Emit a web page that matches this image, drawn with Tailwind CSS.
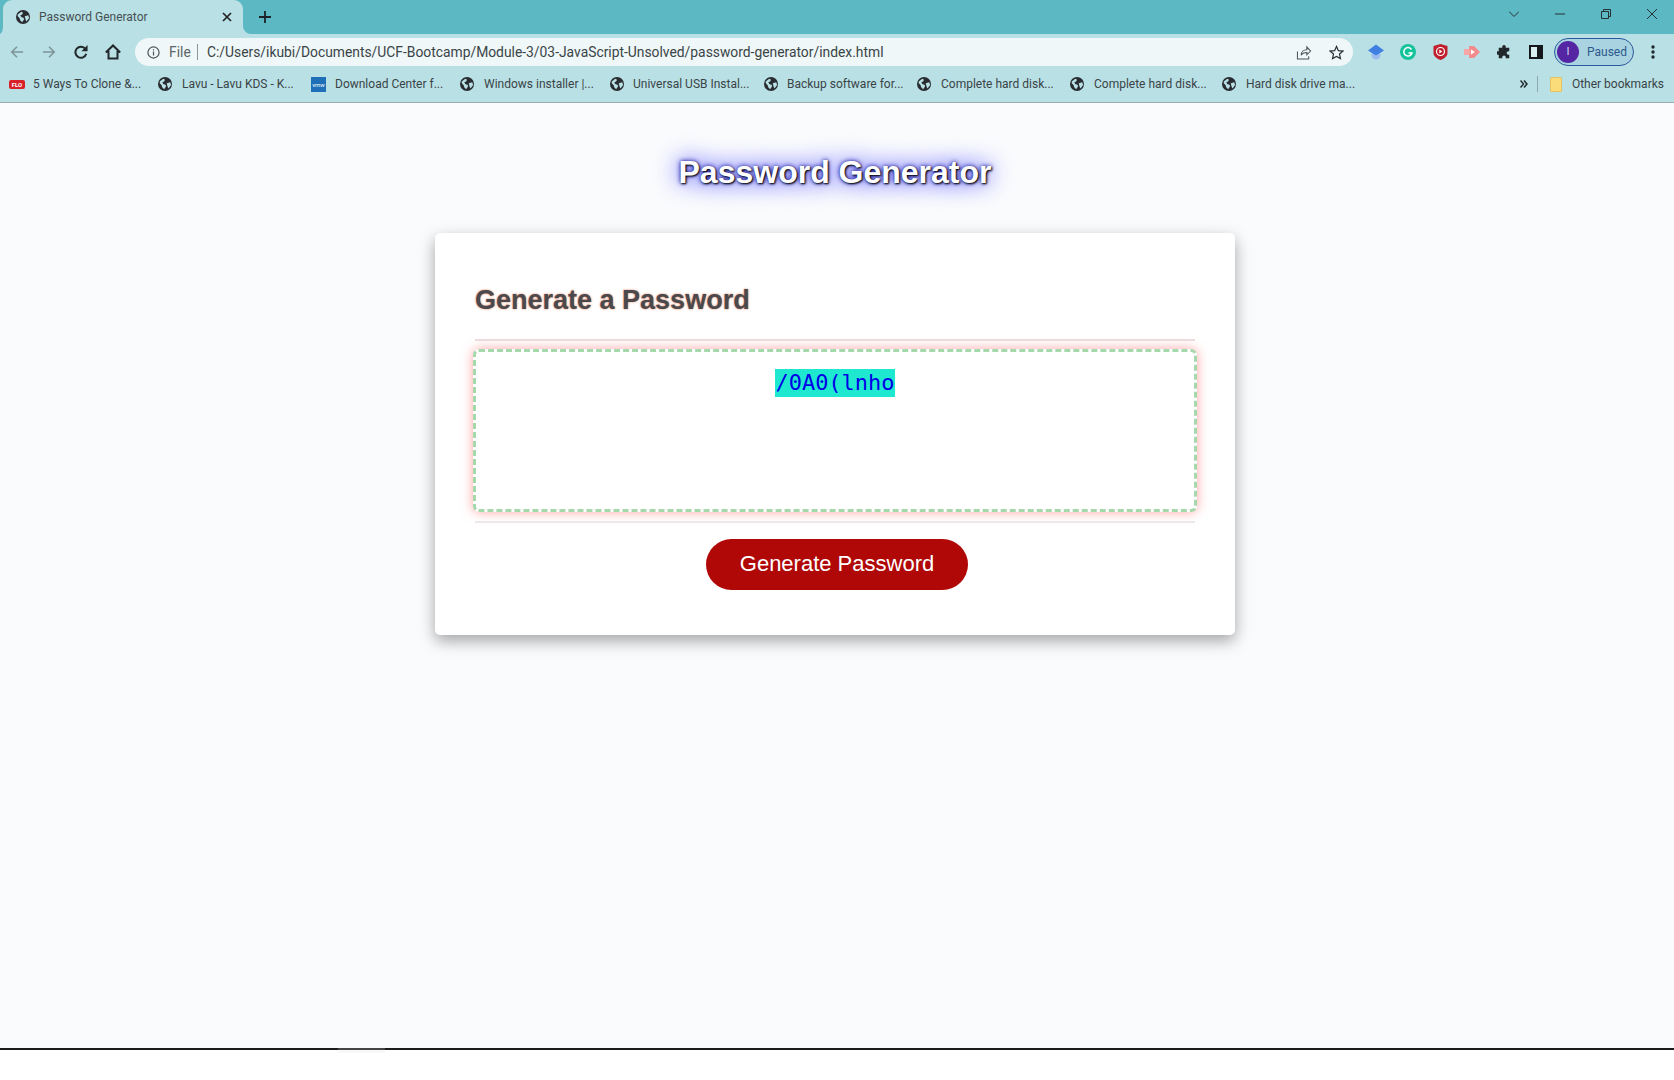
<!DOCTYPE html>
<html lang="en">

<head>
    <meta charset="UTF-8">
    <title>Password Generator</title>
    <script src="https://cdn.jsdelivr.net/npm/@tailwindcss/browser@4"></script>
</head>

<body class="h-[1080px] overflow-hidden bg-white font-['Roboto','Open_Sans',sans-serif] relative">

    <!-- tab strip -->
    <div class="h-[34px] bg-[#5cb8c3] flex items-end relative">
        <svg class="absolute left-0 bottom-0 w-[3px] h-[8px]" viewBox="0 0 3 8"><path d="M3 0C3 4 2 7 0 8H3Z" fill="#b9e0e5" /></svg>
        <svg class="absolute left-[243px] bottom-0 w-[8px] h-[8px]" viewBox="0 0 8 8"><path d="M0 0A8 8 0 0 0 8 8H0Z" fill="#b9e0e5" /></svg>
        <div class="ml-[3px] w-[240px] h-[34px] bg-[#b9e0e5] rounded-t-[9px] flex items-center pl-[13px] pr-[11px]">
            <svg class="w-[14px] h-[14px] text-[#292c30]" viewBox="0 0 16 16">
                <circle cx="8" cy="8" r="8" fill="currentColor" />
                <path d="M2 5l4-3 2 1-1 2-2 1 1 2 3 1 0 2-2 3-2-2-1-3-2-2zM10 7l4-1 1 3-3 4-1-2z" fill="#b9e0e5" />
            </svg>
            <span class="ml-[9px] text-[12px] text-[#465053] flex-1 whitespace-nowrap">Password Generator</span>
            <svg class="w-[10px] h-[10px] text-[#222]" viewBox="0 0 10 10" fill="none" stroke="currentColor" stroke-width="1.7">
                <path d="M1 1l8 8M9 1l-8 8" />
            </svg>
        </div>
        <svg class="ml-[16px] mb-[11px] w-[12px] h-[12px] text-[#1c2326]" viewBox="0 0 12 12" fill="none" stroke="currentColor" stroke-width="1.8">
            <path d="M6 0v12M0 6h12" />
        </svg>
        <div class="ml-auto mr-[17px] mb-[15px] flex items-center gap-[36px] text-[#273033]">
            <svg class="w-[10px] h-[10px]" viewBox="0 0 10 10" fill="none" stroke="currentColor"><path d="M0 2.500l5 5 5-5" /></svg>
            <svg class="w-[10px] h-[10px]" viewBox="0 0 10 10" fill="none" stroke="currentColor"><path d="M0 5h10" /></svg>
            <svg class="w-[10px] h-[10px]" viewBox="0 0 10 10" fill="none" stroke="currentColor"><path d="M.5 2.500h7v7h-7zM2.500 2.500v-2h7v7h-2" /></svg>
            <svg class="w-[10px] h-[10px]" viewBox="0 0 10 10" fill="none" stroke="currentColor"><path d="M0 0l10 10M10 0l-10 10" /></svg>
        </div>
    </div>

    <!-- toolbar -->
    <div class="h-[36px] bg-[#b9e0e5] flex items-center pl-[10px]">
        <svg class="w-[14px] h-[14px] text-[#7e9499]" viewBox="0 0 16 16" fill="none" stroke="currentColor" stroke-width="1.800"><path d="M15 8H2M8 2L2 8l6 6" /></svg>
        <svg class="ml-[18px] w-[14px] h-[14px] text-[#7e9499]" viewBox="0 0 16 16" fill="none" stroke="currentColor" stroke-width="1.800"><path d="M1 8h13M8 2l6 6-6 6" /></svg>
        <svg class="ml-[18px] w-[14px] h-[14px] text-[#21282b]" viewBox="0 0 16 16" fill="none" stroke="currentColor" stroke-width="2.300"><path d="M13 4.500A6.300 6.300 0 1 0 14 10" /><path d="M15.500 0v7h-7z" fill="currentColor" stroke="none" /></svg>
        <svg class="ml-[17px] w-[16px] h-[16px] text-[#21282b]" viewBox="0 0 16 16" fill="none" stroke="currentColor" stroke-width="2"><path d="M.8 8.500L8 1.500l7.200 7M3.500 7v7.500h9V7" /></svg>
        <div class="ml-[14px] w-[1218px] h-[28px] bg-[#eff7f8] rounded-full flex items-center pl-[12px] pr-[9px] text-[13.85px]">
            <svg class="w-[13px] h-[13px] text-[#4a5558]" viewBox="0 0 14 14" fill="none" stroke="currentColor" stroke-width="1.300"><circle cx="7" cy="7" r="6" /><path d="M7 6v4.200M7 3.400v1.400" /></svg>
            <span class="ml-[9px] w-[20px] text-[#5c6669]">File</span>
            <span class="ml-[8px] w-px h-[16px] bg-[#8d9699]"></span>
            <span class="ml-[9px] text-[#3a4447] flex-1 whitespace-nowrap">C:/Users/ikubi/Documents/UCF-Bootcamp/Module-3/03-JavaScript-Unsolved/password-generator/index.html</span>
            <svg class="w-[16px] h-[15px] text-[#4a5558]" viewBox="0 0 16 16" fill="none" stroke="currentColor" stroke-width="1.100"><path d="M1 7v8h12v-3M5 11c0-4 3-6 6-6V2l4 4.500-4 4V8c-3 0-5 1-6 3z" /></svg>
            <svg class="ml-[17px] w-[15px] h-[15px] text-[#273033]" viewBox="0 0 16 16" fill="none" stroke="currentColor" stroke-width="1.300"><path d="M8 1.500l2 4.500 4.800.5-3.600 3.200 1 4.800L8 12.200l-4.200 2.300 1-4.800L1.200 6.500 6 6z" /></svg>
        </div>
        <svg class="ml-[15px] w-[16px] h-[16px]" viewBox="0 0 16 16"><circle cx="8" cy="11" r="4.500" fill="#9cbcf0" /><path d="M8 .5l8 6-8 5-8-5z" fill="#3f7fe0" /></svg>
        <svg class="ml-[16px] w-[16px] h-[16px]" viewBox="0 0 16 16"><circle cx="8" cy="8" r="8" fill="#15c39a" /><path d="M11.500 5.500A4.200 4.200 0 1 0 12 9H8.500" fill="none" stroke="#fff" stroke-width="1.500" /></svg>
        <svg class="ml-[17px] w-[15px] h-[16px]" viewBox="0 0 15 16"><path d="M7.500 0l7 2v7c0 3-3 5.500-7 7-4-1.500-7-4-7-7V2z" fill="#c0202e" /><circle cx="7.500" cy="7.500" r="4" fill="none" stroke="#fff" stroke-width="1.200" /><path d="M6.300 5.500l3 2-3 2z" fill="#fff" /></svg>
        <svg class="ml-[16px] w-[16px] h-[12px]" viewBox="0 0 16 12"><path d="M5 0h5l6 6-6 6H5z" fill="#f28c8c" /><rect x="0" y="3" width="6" height="6" fill="#f5a5a5" /><path d="M7 3.500l4 2.500-4 2.500z" fill="#fff" /></svg>
        <svg class="ml-[17px] w-[14px] h-[14px] text-[#21282b]" viewBox="0 0 16 16" fill="currentColor"><path d="M6 2a2 2 0 0 1 4 0v1h4v4h-1a2 2 0 0 0 0 4h1v4h-4v-1a2 2 0 0 0-4 0v1H2v-4H1a2 2 0 0 1 0-4h1V3h4z" /></svg>
        <div class="ml-[18px] w-[14px] h-[14px] border-[2px] border-[#15191b] border-r-[6px] bg-[#d8eef0]"></div>
        <div class="ml-[11px] w-[80px] h-[28px] rounded-full border border-[#2d5a9c] bg-[#a9d3e0] flex items-center pl-[2px]">
            <span class="w-[22px] h-[22px] rounded-full bg-[#5426a3] text-[#d8d0ee] text-[11px] flex items-center justify-center">I</span>
            <span class="ml-[8px] text-[12px] text-[#2d5a8c]">Paused</span>
        </div>
        <svg class="ml-[17px] w-[4px] h-[14px] text-[#21282b]" viewBox="0 0 4 14" fill="currentColor"><circle cx="2" cy="2" r="1.700" /><circle cx="2" cy="7" r="1.700" /><circle cx="2" cy="12" r="1.700" /></svg>
    </div>

    <!-- bookmarks bar -->
    <div class="h-[33px] bg-[#b9e0e5] border-b border-[#98adb1] flex items-center pl-[9px] pr-[10px] pb-[4px] text-[12px] text-[#3a4447] whitespace-nowrap">
        <span class="w-[16px] h-[9px] bg-[#d8202a] rounded-[2px] text-white text-[6px] leading-[9px] text-center font-bold">FLO</span>
        <span class="ml-[8px] w-[125px]">5 Ways To Clone &amp;...</span>
        <svg class="w-[14px] h-[14px] text-[#292c30]" viewBox="0 0 16 16"><circle cx="8" cy="8" r="8" fill="currentColor" /><path d="M2 5l4-3 2 1-1 2-2 1 1 2 3 1 0 2-2 3-2-2-1-3-2-2zM10 7l4-1 1 3-3 4-1-2z" fill="#b9e0e5" /></svg>
        <span class="ml-[10px] w-[129px]">Lavu - Lavu KDS - K...</span>
        <span class="w-[15px] h-[15px] bg-[#1d6fb8] text-white text-[6px] leading-[15px] text-center">vmw</span>
        <span class="ml-[9px] w-[125px]">Download Center f...</span>
        <svg class="w-[14px] h-[14px] text-[#292c30]" viewBox="0 0 16 16"><circle cx="8" cy="8" r="8" fill="currentColor" /><path d="M2 5l4-3 2 1-1 2-2 1 1 2 3 1 0 2-2 3-2-2-1-3-2-2zM10 7l4-1 1 3-3 4-1-2z" fill="#b9e0e5" /></svg>
        <span class="ml-[10px] w-[126px]">Windows installer |...</span>
        <svg class="w-[14px] h-[14px] text-[#292c30]" viewBox="0 0 16 16"><circle cx="8" cy="8" r="8" fill="currentColor" /><path d="M2 5l4-3 2 1-1 2-2 1 1 2 3 1 0 2-2 3-2-2-1-3-2-2zM10 7l4-1 1 3-3 4-1-2z" fill="#b9e0e5" /></svg>
        <span class="ml-[9px] w-[131px]">Universal USB Instal...</span>
        <svg class="w-[14px] h-[14px] text-[#292c30]" viewBox="0 0 16 16"><circle cx="8" cy="8" r="8" fill="currentColor" /><path d="M2 5l4-3 2 1-1 2-2 1 1 2 3 1 0 2-2 3-2-2-1-3-2-2zM10 7l4-1 1 3-3 4-1-2z" fill="#b9e0e5" /></svg>
        <span class="ml-[9px] w-[130px]">Backup software for...</span>
        <svg class="w-[14px] h-[14px] text-[#292c30]" viewBox="0 0 16 16"><circle cx="8" cy="8" r="8" fill="currentColor" /><path d="M2 5l4-3 2 1-1 2-2 1 1 2 3 1 0 2-2 3-2-2-1-3-2-2zM10 7l4-1 1 3-3 4-1-2z" fill="#b9e0e5" /></svg>
        <span class="ml-[10px] w-[129px]">Complete hard disk...</span>
        <svg class="w-[14px] h-[14px] text-[#292c30]" viewBox="0 0 16 16"><circle cx="8" cy="8" r="8" fill="currentColor" /><path d="M2 5l4-3 2 1-1 2-2 1 1 2 3 1 0 2-2 3-2-2-1-3-2-2zM10 7l4-1 1 3-3 4-1-2z" fill="#b9e0e5" /></svg>
        <span class="ml-[10px] w-[128px]">Complete hard disk...</span>
        <svg class="w-[14px] h-[14px] text-[#292c30]" viewBox="0 0 16 16"><circle cx="8" cy="8" r="8" fill="currentColor" /><path d="M2 5l4-3 2 1-1 2-2 1 1 2 3 1 0 2-2 3-2-2-1-3-2-2zM10 7l4-1 1 3-3 4-1-2z" fill="#b9e0e5" /></svg>
        <span class="ml-[10px]">Hard disk drive ma...</span>
        <svg class="ml-auto w-[8px] h-[8px] text-[#21282b]" viewBox="0 0 8 8" fill="none" stroke="currentColor" stroke-width="1.500"><path d="M.5 .5L3.500 4 .5 7.500M4 .5L7 4 4 7.500" /></svg>
        <span class="ml-[9px] w-px h-[16px] bg-[#8fa6aa]"></span>
        <span class="ml-[12px] w-[12px] h-[15px] bg-[#fbdc7a] border border-[#e3c264] rounded-[1px]"></span>
        <span class="ml-[10px]">Other bookmarks</span>
    </div>

    <!-- page -->
    <main class="h-[947px] bg-[#fafbfd] border-b-2 border-[#1b1b1b] pr-[4px] font-['Liberation_Sans',Arial,sans-serif] flex flex-col items-center">
        <h1 class="mt-[50px] text-[32px] leading-[38px] font-bold text-white [text-shadow:1px_1px_2px_black,0_0_25px_blue,0_0_5px_darkblue]">Password Generator</h1>

        <section class="mt-[42px] w-[800px] h-[402px] bg-white rounded-[5px] shadow-[0_6px_16px_rgba(0,0,0,0.35)] px-[40px] pt-[51px] flex flex-col">
            <h2 class="text-[27px] leading-[32px] font-bold text-[#4a4a4e] [text-shadow:0_0_2px_#e0643a]">Generate a Password</h2>
            <div class="mt-[23px] h-[2px] bg-[#ecdfe2]"></div>
            <div class="mt-[8px] -mx-[2px] h-[163px] rounded-[6px] border-[3px] border-dashed border-[#a5d8ab] bg-white shadow-[0_0_12px_rgba(255,90,90,0.55)] text-center pt-[17px]">
                <span class="inline-block h-[28px] font-['DejaVu_Sans_Mono',monospace] text-[22px] leading-[28px] text-[#0000e6] bg-[#1fe8d0]">/0A0(lnho</span>
            </div>
            <div class="mt-[9px] h-[2px] bg-[#ebe9ea]"></div>
            <button class="mt-[16px] ml-[231px] w-[262px] h-[51px] pb-[2px] rounded-full bg-[#b00707] text-white text-[22px]">Generate Password</button>
        </section>
    </main>

    <!-- task switcher sliver over the bottom edge -->
    <div class="absolute left-[338px] top-[1048px] w-[47px] h-[2px] bg-[#444444]"></div>
    <div class="absolute left-[338px] top-[1050px] w-[47px] h-[3px] bg-[#f8f8f8]"></div>

</body>

</html>
